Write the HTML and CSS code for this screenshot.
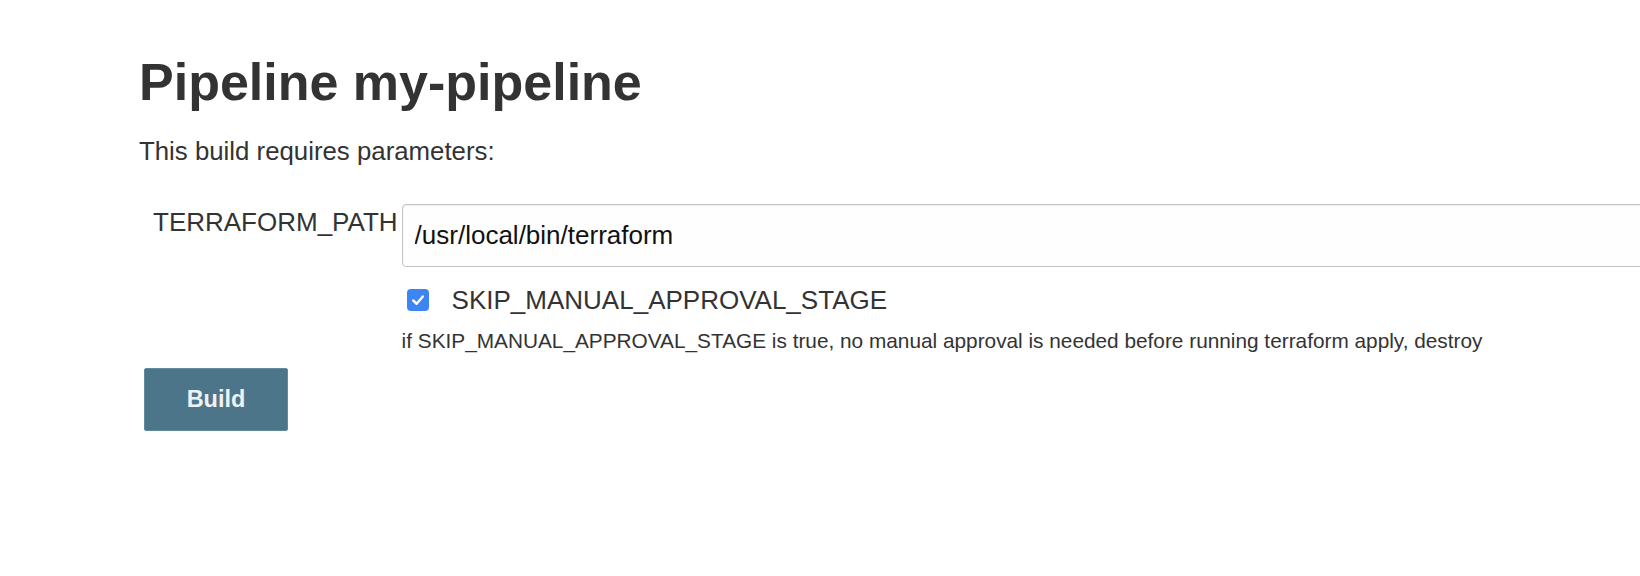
FILE: index.html
```html
<!DOCTYPE html>
<html lang="en">
<head>
<meta charset="utf-8">
<title>Pipeline my-pipeline</title>
<link rel="stylesheet" href="styles.css">
</head>
<body>
<div class="page">
  <h1 class="title">Pipeline my-pipeline</h1>
  <p class="intro">This build requires parameters:</p>
  <form class="params">
    <div class="param-name">TERRAFORM_PATH</div>
    <div class="param-value">
      <input class="text-input" type="text" value="/usr/local/bin/terraform">
    </div>
    <div class="param-name"></div>
    <div class="param-value">
      <label class="check-row">
        <span class="check-box">
          <svg width="22" height="22" viewBox="0 0 22 22"><path d="M6.2 11.4 L9.6 14.8 L15.8 7.4" fill="none" stroke="#fff" stroke-width="2.4" stroke-linecap="round" stroke-linejoin="round"/></svg>
        </span>
        <span class="check-label">SKIP_MANUAL_APPROVAL_STAGE</span>
      </label>
      <div class="description">if SKIP_MANUAL_APPROVAL_STAGE is true, no manual approval is needed before running terraform apply, destroy</div>
    </div>
  </form>
  <button class="build-btn" type="button">Build</button>
</div>
</body>
</html>
```
FILE: styles.css
```css
html, body {
  margin: 0;
  padding: 0;
  background: #fff;
}
body {
  font-family: "Liberation Sans", Arial, Helvetica, sans-serif;
  color: #333;
  overflow: hidden;
}
.page {
  padding: 52px 0 0 139px;
  overflow: hidden;
}
.title {
  margin: 0;
  font-size: 52px;
  line-height: 60px;
  font-weight: 700;
  color: #333;
}
.intro {
  margin: 24px 0 0;
  font-size: 25.8px;
  line-height: 30px;
}
.params {
  margin-top: 38px;
  display: grid;
  grid-template-columns: auto 1fr;
}
.param-name {
  padding: 3px 4px 0 14px;
  font-size: 26px;
  line-height: 30px;
}
.param-value {
  display: flex;
  flex-direction: column;
  min-width: 0;
}
.text-input {
  box-sizing: border-box;
  width: calc(100% + 60px);
  height: 63px;
  margin: 0;
  padding: 0 12px;
  border: 1px solid #c4c4c4;
  border-radius: 4px;
  box-shadow: inset 0 1px 2px rgba(0, 0, 0, 0.07);
  background: #fefefe;
  font-family: "Liberation Sans", Arial, Helvetica, sans-serif;
  font-size: 26px;
  color: #111;
  outline: none;
}
.check-row {
  margin-top: 18px;
  display: flex;
  align-items: center;
  height: 30px;
}
.check-box {
  width: 22px;
  height: 22px;
  margin-left: 5px;
  border-radius: 4px;
  background: #3d85f5;
  display: flex;
}
.check-label {
  margin-left: 23px;
  font-size: 26px;
  line-height: 30px;
}
.description {
  margin-top: 14px;
  font-size: 20.8px;
  line-height: 24px;
}
.build-btn {
  margin: 15px 0 0 5px;
  width: 144px;
  height: 63px;
  box-sizing: border-box;
  border: 1px solid #5f8ba1;
  border-radius: 2px;
  background: #4d7589;
  color: #eef2f4;
  font-family: "Liberation Sans", Arial, Helvetica, sans-serif;
  font-size: 23.5px;
  font-weight: 700;
  padding: 0;
  display: block;
}
```
